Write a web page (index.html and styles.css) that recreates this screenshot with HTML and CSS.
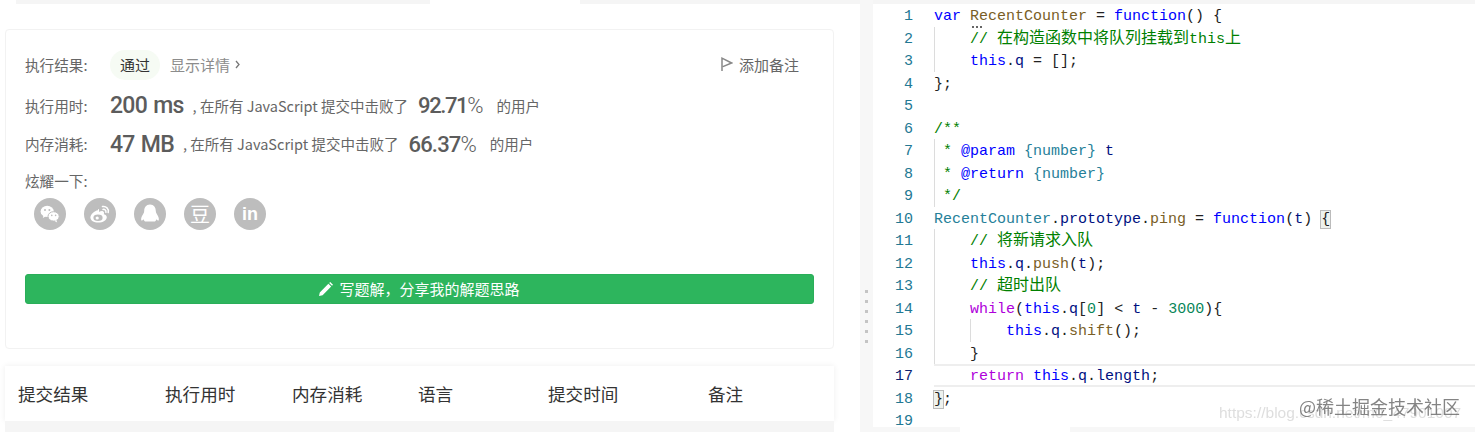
FILE: index.html
```html
<!DOCTYPE html>
<html lang="zh">
<head>
<meta charset="utf-8">
<title>提交结果</title>
<link rel="stylesheet" href="styles.css">
</head>
<body>
<div class="page">
  <section class="left">
    <div class="strip"><i class="s-a"></i><i class="s-tab"></i><i class="s-b"></i></div>
    <div class="card">
      <div class="row r1">
        <span class="label">执行结果:</span>
        <span class="pill">通过</span>
        <span class="detail">显示详情 <svg class="chev" width="5" height="9" viewBox="0 0 5 9"><path d="M1 1l3 3.5L1 8" fill="none" stroke="#777" stroke-width="1.3"/></svg></span>
        <span class="note"><svg width="12" height="15" viewBox="0 0 12 15"><path d="M1 14V1.2L10.6 6 1.9 9.6" fill="none" stroke="#888" stroke-width="1.5"/></svg>添加备注</span>
      </div>
      <div class="row r2">
        <span class="label">执行用时:</span>
        <span class="big">200 ms</span>
        <span class="txt t1">, 在所有 JavaScript 提交中击败了</span>
        <span class="big pct">92.71<em>%</em></span>
        <span class="txt t2">的用户</span>
      </div>
      <div class="row r3">
        <span class="label">内存消耗:</span>
        <span class="big">47 MB</span>
        <span class="txt t1">, 在所有 JavaScript 提交中击败了</span>
        <span class="big pct">66.37<em>%</em></span>
        <span class="txt t2">的用户</span>
      </div>
      <div class="share-label">炫耀一下:</div>
      <div class="icons">
        <span class="ic"><svg width="32" height="32" viewBox="0 0 32 32"><ellipse cx="13.2" cy="13.4" rx="6.6" ry="5.6" fill="#fff"/><path d="M9.6 17l-.8 3 3.2-1.8z" fill="#fff"/><ellipse cx="19.6" cy="18.4" rx="5.6" ry="4.7" fill="#fff" stroke="#bdbdbd" stroke-width="1"/><path d="M22.4 22l.8 2.4-3-1.6z" fill="#fff"/><circle cx="11" cy="12" r="1" fill="#bdbdbd"/><circle cx="15.4" cy="12" r="1" fill="#bdbdbd"/><circle cx="17.8" cy="17.4" r=".8" fill="#bdbdbd"/><circle cx="21.6" cy="17.4" r=".8" fill="#bdbdbd"/></svg></span>
        <span class="ic"><svg width="32" height="32" viewBox="0 0 32 32"><path d="M14 12.2c-3.6.6-7.6 4-7.6 7.4 0 3 3.6 5 7.8 5 4.8 0 8.6-2.6 8.6-5.4 0-2-2-2.8-3-3 .5-1.3.4-2.6-1-3-1.2-.3-2.8.3-3.8.7.3-1.2.1-3.2-1-2.7z" fill="#fff"/><ellipse cx="14" cy="19.8" rx="4.6" ry="3.3" fill="#bdbdbd"/><circle cx="13.2" cy="20" r="1.6" fill="#fff"/><path d="M18.5 8.6c3.400-.8 6.700 2.200 5.700 6M19 11.400c1.800-.4 3.300 1 2.900 2.900" fill="none" stroke="#fff" stroke-width="1.500" stroke-linecap="round"/></svg></span>
        <span class="ic"><svg width="32" height="32" viewBox="0 0 32 32"><path d="M16 6.500c-4 0-5.800 3-5.800 6.500 0 1-.3 1.900-1 3-1.200 1.900-2.500 4.300-2 6.200.4.900 1.400.1 2.300-1 .3 1 .8 1.800 1.500 2.300h10c.7-.5 1.200-1.300 1.500-2.300.9 1.100 1.900 1.900 2.300 1 .5-1.900-.8-4.300-2-6.200-.7-1.100-1-2-1-3 0-3.500-1.800-6.500-5.800-6.500z" fill="#fff"/></svg></span>
        <span class="ic ic-text dou">豆</span>
        <span class="ic ic-text lin">in</span>
      </div>
      <button class="solve" type="button"><svg width="14" height="14" viewBox="0 0 14 14"><path d="M0 14l.8-3.600L9.400 1.800l2.800 2.800L3.600 13.200zM10.200 1l1-1 2.800 2.800-1 1z" fill="#fff"/></svg>写题解&#65292;分享我的解题思路</button>
    </div>
    <div class="thead">
      <span class="th c1">提交结果</span><span class="th c2">执行用时</span><span class="th c3">内存消耗</span><span class="th c4">语言</span><span class="th c5">提交时间</span><span class="th">备注</span>
    </div>
    <div class="rest"></div>
  </section>
  <div class="splitter">
    <div class="grip"><i></i><i></i><i></i><i></i><i></i><i></i></div>
  </div>
  <section class="editor">
    <div class="strip e-strip"></div>
    <div class="line"><span class="ln">1</span><span class="code"><b class="k">var</b> <b class="fn hint">RecentCounter</b> = <b class="k">function</b>() {</span></div>
    <div class="line g1"><span class="ln">2</span><span class="code">    <b class="c">// <span class="zh">在构造函数中将队列挂载到</span>this<span class="zh">上</span></b></span></div>
    <div class="line g1"><span class="ln">3</span><span class="code">    <b class="k">this</b>.<b class="v">q</b> = [];</span></div>
    <div class="line"><span class="ln">4</span><span class="code">};</span></div>
    <div class="line"><span class="ln">5</span><span class="code"></span></div>
    <div class="line"><span class="ln">6</span><span class="code"><b class="c">/**</b></span></div>
    <div class="line g1"><span class="ln">7</span><span class="code"> <b class="c">*</b> <b class="k">@param</b> <b class="t">{number}</b> <b class="v">t</b></span></div>
    <div class="line g1"><span class="ln">8</span><span class="code"> <b class="c">*</b> <b class="k">@return</b> <b class="t">{number}</b></span></div>
    <div class="line g1"><span class="ln">9</span><span class="code"> <b class="c">*/</b></span></div>
    <div class="line"><span class="ln">10</span><span class="code"><b class="t">RecentCounter</b>.<b class="v">prototype</b>.<b class="fn">ping</b> = <b class="k">function</b>(<b class="v">t</b>) <b class="match">{</b></span></div>
    <div class="line g1"><span class="ln">11</span><span class="code">    <b class="c">// <span class="zh">将新请求入队</span></b></span></div>
    <div class="line g1"><span class="ln">12</span><span class="code">    <b class="k">this</b>.<b class="v">q</b>.<b class="fn">push</b>(<b class="v">t</b>);</span></div>
    <div class="line g1"><span class="ln">13</span><span class="code">    <b class="c">// <span class="zh">超时出队</span></b></span></div>
    <div class="line g1"><span class="ln">14</span><span class="code">    <b class="p">while</b>(<b class="k">this</b>.<b class="v">q</b>[<b class="n">0</b>] &lt; <b class="v">t</b> - <b class="n">3000</b>){</span></div>
    <div class="line g1 g2"><span class="ln">15</span><span class="code">        <b class="k">this</b>.<b class="v">q</b>.<b class="fn">shift</b>();</span></div>
    <div class="line g1"><span class="ln">16</span><span class="code">    }</span></div>
    <div class="line cur"><span class="ln">17</span><span class="code">    <b class="p">return</b> <b class="k">this</b>.<b class="v">q</b>.<b class="v">length</b>;</span></div>
    <div class="line"><span class="ln">18</span><span class="code"><b class="match">}</b>;</span></div>
    <div class="line"><span class="ln">19</span><span class="code"></span></div>
    <div class="hscroll"><i></i></div>
    <div class="wm-url">https://blog.csdn.net/m0_47901007</div>
    <div class="wm-name">@稀土掘金技术社区</div>
  </section>
</div>
</body>
</html>
```
FILE: styles.css
```css
* { box-sizing: border-box; }
html, body { margin: 0; height: 100%; background: #fff; overflow: hidden; }
body { font-family: "Noto Sans CJK SC", "Liberation Sans", sans-serif; color: #5c5c5c; }
.page { display: flex; width: 1475px; height: 432px; }

.left { width: 860px; display: flex; flex-direction: column; }
.strip { height: 4px; display: flex; flex: none; }
.strip i { display: block; }
.s-a { width: 414px; background: #f5f5f5; margin-left: 16px; }
.s-tab { width: 150px; background: #fff; }
.s-b { flex: 1; background: #f5f5f5; }

.card {
  margin: 25px 26px 0 5px;
  height: 320px;
  flex: none;
  border: 1px solid #f2f2f2;
  border-radius: 4px;
  padding: 20px 19px 0;
}
.row { display: flex; align-items: center; height: 30px; }
.r2 { margin-top: 10px; }
.r3 { margin-top: 9px; }
.label { width: 85px; font-size: 14.6px; color: #666; flex: none; }
.r1 .label, .detail, .note { padding-bottom: 2px; }
.r3 .label, .r3 .txt { padding-bottom: 1px; }
.pill {
  width: 50px; height: 30px; border-radius: 15px; background: #f6fbf4;
  color: #333; font-size: 15px; line-height: 29px; text-align: center; flex: none;
}
.detail { margin-left: 10px; font-size: 15px; color: #8c8c8c; display: flex; align-items: center; gap: 5px; }
.chev { margin-top: 1px; }
.note {
  margin-left: auto; margin-right: 15px; font-size: 15px; color: #666;
  display: flex; align-items: center; gap: 6px;
}
.big {
  font-family: Roboto, "Liberation Sans", sans-serif; font-weight: 500;
  font-size: 23px; letter-spacing: -.7px; word-spacing: 1px; color: #5c5c5c; white-space: nowrap;
}
.big em { font-style: normal; font-weight: 300; letter-spacing: 0; }
.txt { font-size: 14.5px; color: #666; white-space: pre; }
.t1 { margin-left: 9px; }
.pct { margin-left: 10px; font-size: 22px; letter-spacing: -1.4px; }
.r3 .pct { letter-spacing: -.8px; }
.t2 { margin-left: 13px; }
.share-label { margin-top: 11px; font-size: 14.6px; line-height: 22px; color: #666; }
.icons { display: flex; gap: 18px; margin: 6px 0 0 9px; }
.ic {
  width: 32px; height: 32px; border-radius: 50%; background: #bdbdbd;
  display: flex; align-items: center; justify-content: center; flex: none;
}
.ic-text { color: #fff; line-height: 32px; }
.dou { font-size: 20px; }
.lin { font-family: "Liberation Sans", sans-serif; font-size: 18px; font-weight: 700; }
.solve {
  display: flex; align-items: center; justify-content: center; gap: 6px;
  width: 789px; height: 30px; margin-top: 44px; padding: 0 0 1px;
  border: 1px solid #2aae59; border-radius: 3px; background: #2db55d;
  color: #fff; font: 15px "Noto Sans CJK SC", sans-serif;
}

.thead {
  display: flex; align-items: center; flex: none;
  margin: 17px 26px 0 5px; height: 55px; padding: 0 0 1px 13px;
  font-size: 17.6px; color: #333; background: #fff;
  box-shadow: 0 0 6px rgba(0, 0, 0, .07);
}
.th { flex: none; }
.c1 { width: 147px; }
.c2 { width: 127px; }
.c3 { width: 126px; }
.c4 { width: 130px; }
.c5 { width: 160px; }
.rest { flex: 1; background: #f5f5f5; margin: 0 26px 0 5px; }

.splitter { width: 13px; background: #f7f7f7; position: relative; flex: none; }
.grip { position: absolute; left: 5px; top: 290px; display: flex; flex-direction: column; gap: 7px; }
.grip i { display: block; width: 3px; height: 3px; background: #c4c4c4; }

.editor {
  position: relative; flex: 1; overflow: hidden;
  font-family: "Liberation Mono", "Noto Sans CJK SC", monospace;
  font-size: 15px; color: #222;
}
.e-strip { background: #f5f5f5; }
.line { display: flex; height: 22.5px; line-height: 26.5px; white-space: pre; }
.ln { width: 40px; text-align: right; color: #237893; flex: none; }
.code { margin-left: 21px; flex: 1; display: block; height: 22.5px; }
.g1 .code { background: linear-gradient(#dcdcdc, #dcdcdc) 0 0 / 1px 100% no-repeat; }
.g2 .code {
  background:
    linear-gradient(#dcdcdc, #dcdcdc) 0 0 / 1px 100% no-repeat,
    linear-gradient(#dcdcdc, #dcdcdc) 36px 0 / 1px 100% no-repeat;
}
.line b { font-weight: 400; }
.k { color: #0000ff; }
.fn { color: #795e26; }
.c { color: #008000; }
.v { color: #001080; }
.t { color: #267f99; }
.n { color: #098658; }
.p { color: #af00db; }
.zh { font-size: 16px; font-family: "Noto Sans CJK SC", sans-serif; line-height: 0; }
.hint { position: relative; }
.hint::after {
  content: ""; position: absolute; left: 1px; top: 18px; width: 12px; height: 2px;
  background: radial-gradient(circle, #666 0 1px, transparent 1px) 0 0 / 4px 2px repeat-x;
}
.match { outline: 1px solid #bbb; background: #eef2ee; }
.cur .ln { color: #0b216f; }
.cur .code { box-shadow: inset 0 2px #eeeeee, inset 0 -2px #eeeeee; }
.hscroll { position: absolute; left: 0; right: 0; bottom: 0; height: 5px; background: #f7f7f7; }
.hscroll i { display: block; width: 110px; height: 5px; margin-left: 87px; background: #fff; }
.wm-url {
  position: absolute; left: 346px; top: 404px; font: 15.5px "Liberation Sans", sans-serif;
  color: rgba(190, 190, 190, .5); white-space: nowrap; filter: blur(.5px);
}
.wm-name {
  position: absolute; left: 426px; top: 394px; font: 18px "Noto Sans CJK SC", sans-serif;
  color: rgba(110, 110, 110, .85); white-space: nowrap; line-height: 24px; filter: blur(.4px);
}
```
